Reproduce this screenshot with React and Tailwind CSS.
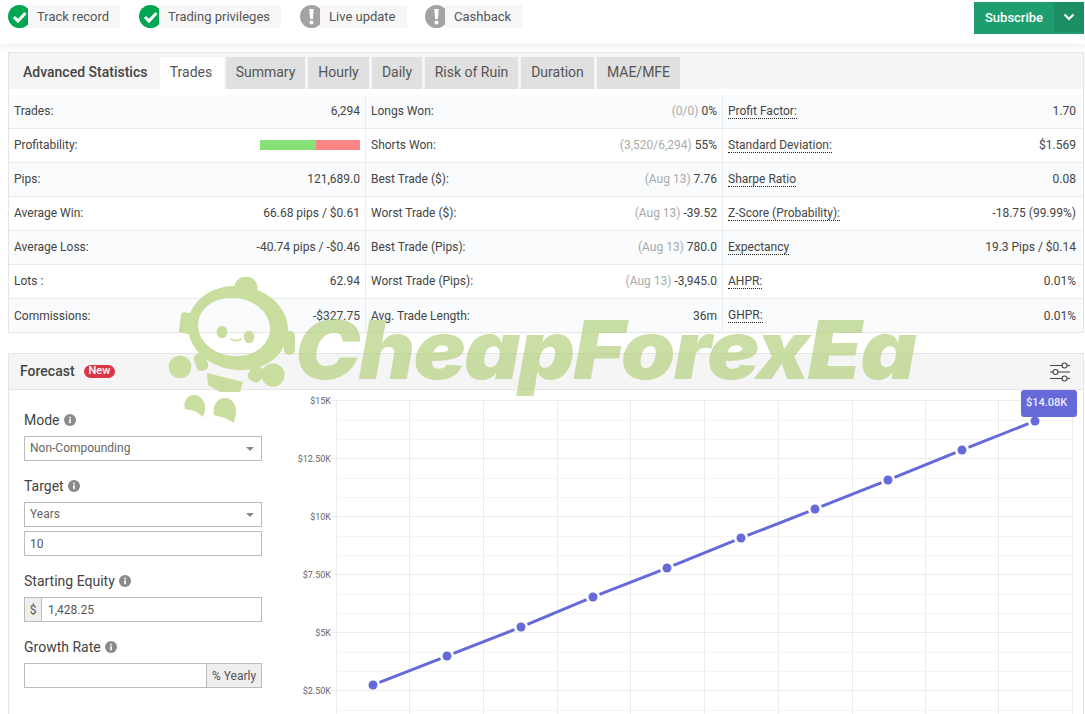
import React from "react";

const rows = [
  [["Trades:", "6,294"], ["Longs Won:", "(0/0)", "0%"], ["Profit Factor:", "1.70", true]],
  [["Profitability:", "BAR"], ["Shorts Won:", "(3,520/6,294)", "55%"], ["Standard Deviation:", "$1.569", true]],
  [["Pips:", "121,689.0"], ["Best Trade ($):", "(Aug 13)", "7.76"], ["Sharpe Ratio", "0.08", true]],
  [["Average Win:", "66.68 pips / $0.61"], ["Worst Trade ($):", "(Aug 13)", "-39.52"], ["Z-Score (Probability):", "-18.75 (99.99%)", true]],
  [["Average Loss:", "-40.74 pips / -$0.46"], ["Best Trade (Pips):", "(Aug 13)", "780.0"], ["Expectancy", "19.3 Pips / $0.14", true]],
  [["Lots :", "62.94"], ["Worst Trade (Pips):", "(Aug 13)", "-3,945.0"], ["AHPR:", "0.01%", true]],
  [["Commissions:", "-$327.75"], ["Avg. Trade Length:", "36m"], ["GHPR:", "0.01%", true]],
];

const tabs = ["Summary", "Hourly", "Daily", "Risk of Ruin", "Duration", "MAE/MFE"];
const tabWidths = ["w-[79px]", "w-[61px]", "w-[50px]", "w-[93px]", "w-[73px]", "w-[83px]"];

function Check() {
  return (
    <svg width="23" height="23" viewBox="0 0 23 23" className="shrink-0">
      <circle cx="11.5" cy="11.5" r="11.5" fill="#00a651" />
      <path d="M6 12l4 4 7.5-8" fill="none" stroke="#fff" strokeWidth="3" />
    </svg>
  );
}

function Warn() {
  return (
    <svg width="23" height="23" viewBox="0 0 23 23" className="shrink-0">
      <circle cx="11.5" cy="11.5" r="11.5" fill="#a3a3a3" />
      <path d="M9.3 4h4.4l-.8 10h-2.8z" fill="#fff" />
      <circle cx="11.5" cy="17.5" r="2" fill="#fff" />
    </svg>
  );
}

function Badge({ ok, label, className }) {
  return (
    <div className={"flex items-center " + className}>
      {ok ? <Check /> : <Warn />}
      <span className="ml-[-3px] flex h-[23px] items-center bg-[#f7f7f7] pl-[9px] pr-[11px] text-[13px] text-[#555]">{label}</span>
    </div>
  );
}

function Info() {
  return (
    <svg width="12" height="12" viewBox="0 0 13 13" className="shrink-0">
      <circle cx="6.5" cy="6.5" r="6.5" fill="#8a8a8a" />
      <rect x="5.6" y="5.6" width="1.8" height="4.4" fill="#fff" />
      <rect x="5.6" y="3" width="1.8" height="1.7" fill="#fff" />
    </svg>
  );
}

function Label({ children }) {
  return (
    <div className="flex h-[20px] items-center gap-[4px] text-[14px] text-[#444]">
      {children}
      <Info />
    </div>
  );
}

function Caret() {
  return <span className="h-0 w-0 border-x-[4.5px] border-t-[4.5px] border-x-transparent border-t-[#888]" />;
}

function Select({ value }) {
  return (
    <div className="flex h-[25px] w-[238px] items-center justify-between border border-[#bbb] bg-white pl-[5px] pr-[7px] text-[12px] text-[#666]">
      <span className="pb-[1px]">{value}</span>
      <Caret />
    </div>
  );
}

function Cell({ cell, colIndex }) {
  const [label, a, b] = cell;
  const dotted = colIndex === 2;
  return (
    <div className={"flex h-full items-center justify-between pb-[1px] pl-[5px] " + (colIndex < 2 ? "border-r border-[#e9ecef] pr-[5px]" : "pr-[7px]")}>
      <span className={dotted ? "border-b border-dotted border-[#222] leading-[14px]" : ""}>{label}</span>
      {a === "BAR" ? (
        <span className="flex h-[10px] w-[100px]">
          <span className="h-full w-[56px] bg-[#86e276]" />
          <span className="h-full w-[44px] bg-[#fd8585]" />
        </span>
      ) : typeof b === "string" ? (
        <span>
          <span className="text-[#aaa]">{a}</span> {b}
        </span>
      ) : (
        <span>{a}</span>
      )}
    </div>
  );
}

const pts = [[373,685],[447,656],[521,627],[593,597],[667,568],[741,538],[815,509],[888,480],[962,450],[1035,421]];
const vLines = [336,409,483,557,630,704,778,852,925,998,1072];
const major = [400,458,516,574,632,690];
const minor = [420,439,478,497,536,555,594,613,652,671,710];
const yLabels = [["$15K",400],["$12.50K",458],["$10K",516],["$7.50K",574],["$5K",632],["$2.50K",690]];

function Chart() {
  return (
    <svg width="793" height="324" viewBox="290 390 793 324" className="block">
      {minor.map((y) => <line key={y} x1="336" x2="1072" y1={y + 0.5} y2={y + 0.5} stroke="#f5f5f5" />)}
      {major.map((y) => <line key={y} x1="331" x2="1072" y1={y + 0.5} y2={y + 0.5} stroke="#ececec" />)}
      {vLines.map((x) => <line key={x} x1={x + 0.5} x2={x + 0.5} y1="400" y2="714" stroke="#ececec" />)}
      {yLabels.map(([t, y]) => (
        <text key={t} x="331" y={y + 4} textAnchor="end" fontSize="9" fill="#666" fontFamily="Roboto, sans-serif">{t}</text>
      ))}
      {pts.slice(1).map((p, i) => {
        const q = pts[i];
        const dx = p[0] - q[0], dy = p[1] - q[1], l = Math.hypot(dx, dy);
        const ux = dx / l, uy = dy / l;
        return <line key={i} x1={q[0] + ux * 7} y1={q[1] + uy * 7} x2={p[0] - ux * 7} y2={p[1] - uy * 7} stroke="#6569d9" strokeWidth="3" />;
      })}
      {pts.map((p, i) => <circle key={i} cx={p[0]} cy={p[1]} r="4.5" fill="#6569d9" />)}
    </svg>
  );
}

function Mascot() {
  const c = "#c9dd9f";
  return (
    <svg width="132" height="150" viewBox="168 277 132 150" className="block">
      <g fill={c}>
        <circle cx="246" cy="288" r="11.5" />
        <path fillRule="evenodd" d="M188 328a50 42 8 1 0 100 0a50 42 8 1 0 -100 0zM198 327a36 29 8 1 0 72 0a36 29 8 1 0 -72 0z" />
        <rect x="180" y="313" width="18" height="21" rx="3" transform="rotate(8 189 323)" />
        <rect x="284" y="331" width="11" height="24" rx="5" />
        <ellipse cx="222" cy="332" rx="5.3" ry="6.3" />
        <ellipse cx="249" cy="337" rx="5.3" ry="6.3" />
        <circle cx="180" cy="367" r="11.3" />
        <circle cx="273" cy="375" r="11.5" />
        <rect x="195" y="353" width="12" height="18" rx="5" transform="rotate(-20 201 362)" />
        <rect x="249" y="366" width="14" height="16" rx="5" transform="rotate(30 256 374)" />
        <path d="M207 373l36 9-3 10h-20l-12-7z" />
        <path d="M194 395c7 0 12 7 11 15l-2 7-8-6-10-2c-2-7 2-14 9-14z" />
        <path d="M225 398c7 0 12 7 11 15l-2 10-9-5-11-3c-2-9 3-17 11-17z" />
      </g>
      <path d="M231 339c3 2 7 2 10 0" stroke={c} strokeWidth="1.6" fill="none" strokeLinecap="round" />
    </svg>
  );
}

export default function App() {
  return (
    <div className="relative h-[714px] w-[1085px] overflow-hidden bg-white font-['Roboto',sans-serif] text-[12px] text-[#444]">
      <div className="flex h-[44px] items-start justify-between bg-white pl-[8px] pt-[5px] shadow-[0_2px_8px_rgba(0,0,0,0.08)]">
        <div className="flex">
          <Badge ok label="Track record" className="w-[131px]" />
          <Badge ok label="Trading privileges" className="w-[161px]" />
          <Badge label="Live update" className="w-[125px]" />
          <Badge label="Cashback" />
        </div>
        <div className="mr-[1px] mt-[-3px] flex h-[32px] w-[110px] items-stretch bg-[#1e9e6e] text-[13px] font-medium text-white">
          <span className="flex flex-1 items-center justify-center">Subscribe</span>
          <span className="flex h-[30px] w-[30px] items-center justify-center bg-[#1b8f63]">
            <svg width="12" height="8" viewBox="0 0 12 8"><path d="M1.5 1.5L6 6l4.5-4.5" fill="none" stroke="#fff" strokeWidth="2.2" /></svg>
          </span>
        </div>
      </div>

      <div className="mx-[8px] mt-[8px] h-[281px] w-[1076px] border border-[#e5e5e5]">
        <div className="flex h-[36px] items-end bg-[#f5f5f5]">
          <div className="flex h-[32px] w-[151px] items-center pb-[2px] pl-[14px] text-[14px] font-medium text-[#444]">Advanced Statistics</div>
          <div className="flex h-[32px] w-[64px] items-center justify-center bg-white pb-[2px] pr-[2px] text-[14px] text-[#555]">Trades</div>
          <div className="ml-[2px] flex gap-[3px]">
            {tabs.map((t, i) => (
              <div key={t} className={"flex h-[32px] items-center justify-center bg-[#e0e0e0] pb-[2px] text-[14px] text-[#555] " + tabWidths[i]}>{t}</div>
            ))}
          </div>
        </div>
        <div className="mt-[6px] h-[237px] overflow-hidden">
          {rows.map((r, i) => (
            <div key={i} className={"grid h-[34px] grid-cols-[357px_357px_1fr] border-b border-[#e9ecef] last:border-b-0 " + (i % 2 === 0 ? "bg-[#f9fbfd]" : "bg-white")}>
              {r.map((c, j) => <Cell key={j} cell={c} colIndex={j} />)}
            </div>
          ))}
        </div>
      </div>

      <div className="mx-[8px] mt-[20px] w-[1076px] border border-[#e5e5e5]">
        <div className="flex h-[36px] items-center justify-between border-b border-[#e5e5e5] bg-[#f5f5f5] pl-[11px] pr-[12px]">
          <div className="flex items-center gap-[9px]">
            <span className="text-[14px] font-medium text-[#444]">Forecast</span>
            <span className="flex h-[13px] items-center rounded-full bg-[#dc3545] px-[5px] text-[11px] font-medium text-white">New</span>
          </div>
          <svg width="22" height="20" viewBox="0 0 22 20" fill="none" stroke="#444" strokeWidth="1.1">
            <path d="M1 3.5h12M18 3.5h3M1 10h3M9 10h12M1 16.5h12M18 16.5h3" />
            <circle cx="15.5" cy="3.5" r="2.5" /><circle cx="6.5" cy="10" r="2.5" /><circle cx="15.5" cy="16.5" r="2.5" />
          </svg>
        </div>
        <div className="flex">
          <div className="w-[281px] pl-[15px] pt-[20px]">
            <Label>Mode</Label>
            <div className="mt-[6px]"><Select value="Non-Compounding" /></div>
            <div className="mt-[15px]"><Label>Target</Label></div>
            <div className="mt-[6px]"><Select value="Years" /></div>
            <div className="mt-[4px] flex h-[25px] w-[238px] items-center border border-[#bbb] pl-[5px] text-[12px] text-[#555]">10</div>
            <div className="mt-[15px]"><Label>Starting Equity</Label></div>
            <div className="mt-[6px] flex h-[25px] w-[238px] border border-[#bbb] text-[12px] text-[#555]">
              <span className="flex w-[17px] items-center justify-center border-r border-[#bbb] bg-[#eee]">$</span>
              <span className="flex items-center pl-[6px]">1,428.25</span>
            </div>
            <div className="mt-[15px]"><Label>Growth Rate</Label></div>
            <div className="mt-[6px] flex h-[25px] w-[238px] justify-end border border-[#bbb] text-[12px] text-[#555]">
              <span className="flex w-[55px] items-center justify-center border-l border-[#bbb] bg-[#eee]">% Yearly</span>
            </div>
          </div>
          <Chart />
        </div>
      </div>

      <div className="absolute left-[1021px] top-[390px] flex h-[27px] w-[56px] items-center rounded-[3px] bg-[#6569d9] pl-[5px] text-[11px] font-medium text-[#eef]">$14.08K</div>

      <div className="pointer-events-none absolute left-[168px] top-[277px]"><Mascot /></div>
      <div className="pointer-events-none absolute left-[295px] top-[300px] origin-left scale-x-[1.075] font-['Inter',sans-serif] text-[81px] leading-[100px] font-black italic tracking-[-1.5px] whitespace-nowrap text-[#b3d07f]/70">CheapForexEa</div>
    </div>
  );
}
